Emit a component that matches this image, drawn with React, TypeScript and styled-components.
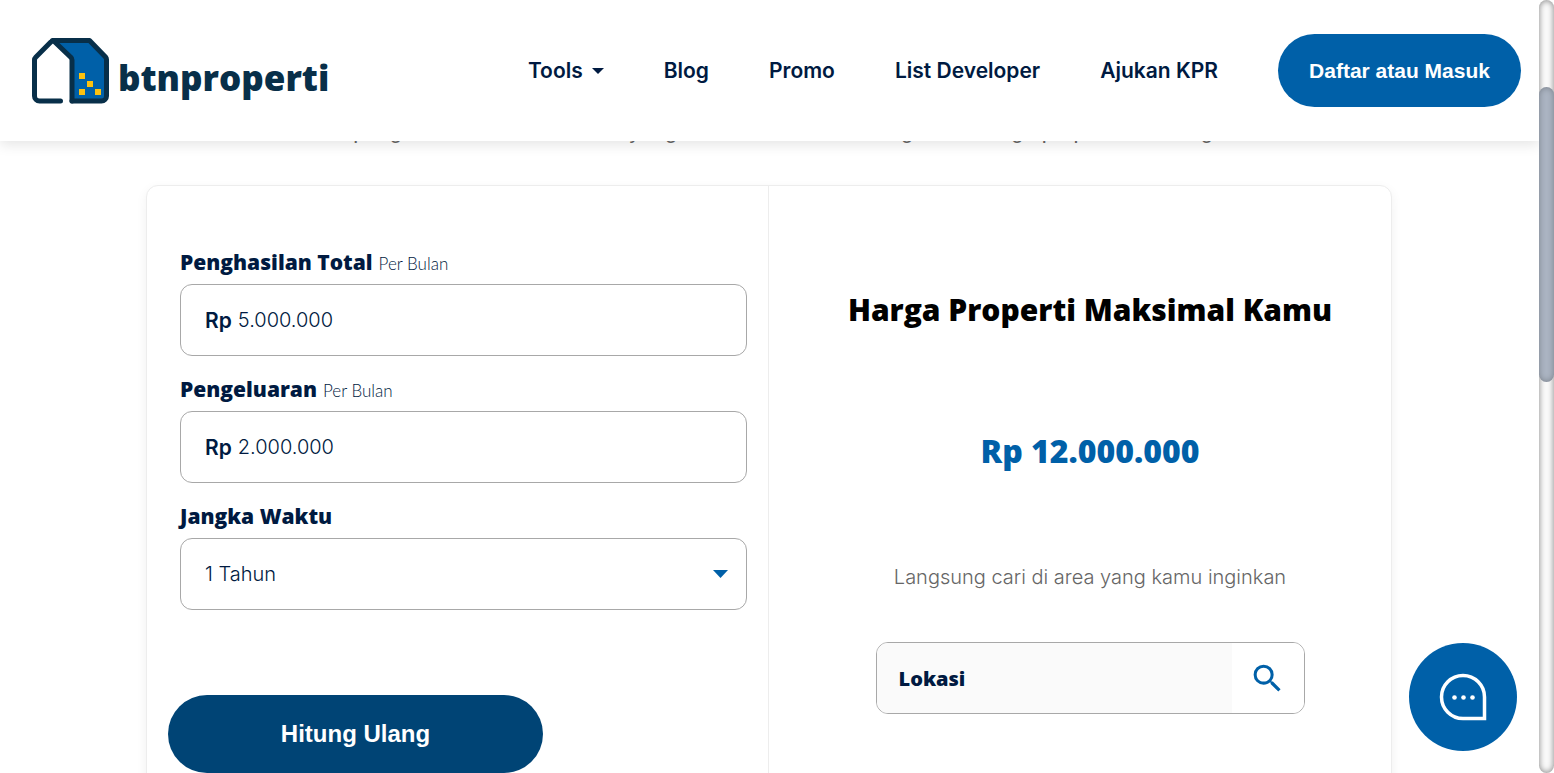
import React, { useState } from "react";
import styled, { createGlobalStyle } from "styled-components";
import { MdSearch } from "react-icons/md";

const navy = "#001a41";
const blue = "#0060a8";
const display = `"Open Sans", Lato, sans-serif`;
const text = `Inter, "Liberation Sans", sans-serif`;

const GlobalStyle = createGlobalStyle`
  *, *::before, *::after { box-sizing: border-box; }
  body { margin: 0; background: #fff; color: ${navy}; font-family: ${text}; }
  button, input, select { font: inherit; color: inherit; }
`;

const Window = styled.div`
  display: grid;
  grid-template-columns: minmax(0, 1fr) 15px;
  height: 100vh;
`;

const Page = styled.div`
  position: relative;
  overflow: hidden;
`;

const ScrollTrack = styled.div`
  display: flex;
  flex-direction: column;
  padding-top: 87px;
  border-radius: 8px;
  background: #fafafa;
  box-shadow: inset 0 0 6px rgba(0, 0, 0, 0.5);
`;

const ScrollThumb = styled.div`
  flex: 0 0 43%;
  border-radius: 8px;
  background: #abb4c2;
  box-shadow: inset 0 0 6px rgba(0, 0, 0, 0.3);
`;

const Header = styled.header`
  position: relative;
  z-index: 2;
  display: flex;
  align-items: center;
  justify-content: space-between;
  height: 141px;
  padding: 0 18px 0 31px;
  background: #fff;
  box-shadow: 0 4px 12px rgba(0, 0, 0, 0.1);
`;

const Brand = styled.a`
  display: flex;
  align-items: center;
  gap: 8px;
  color: #082f49;
  text-decoration: none;
`;

const BrandName = styled.span`
  padding-top: 14px;
  font: 800 35px/48px ${display};
`;

const Nav = styled.nav`
  display: flex;
  align-items: center;
  gap: 60px;
`;

const NavLink = styled.a`
  display: flex;
  align-items: center;
  gap: 9px;
  color: ${navy};
  font-size: 21px;
  font-weight: 600;
  line-height: 24px;
  text-decoration: none;
  white-space: nowrap;
`;

const LoginButton = styled.button`
  width: 243px;
  height: 73px;
  border: 0;
  border-radius: 37px;
  background: ${blue};
  color: #fff;
  font: 700 21px/24px "Liberation Sans", Arial, sans-serif;
  white-space: nowrap;
`;

const Intro = styled.p`
  margin: -22px 0 42px;
  color: #666;
  font: 400 22px/24px "Liberation Sans", Arial, sans-serif;
  text-align: center;
`;

const Main = styled.main`
  padding: 0 147px 0 146px;
`;

const Card = styled.section`
  display: grid;
  grid-template-columns: 1fr 1fr;
  min-height: 680px;
  border: 1px solid #ededed;
  border-radius: 12px;
  background: #fff;
  box-shadow: 0 4px 12px rgba(0, 0, 0, 0.06);
`;

const Form = styled.form`
  padding: 60px 21px 0;
  border-right: 1px solid #ededed;
`;

const Fields = styled.div`
  display: flex;
  flex-direction: column;
  gap: 17px;
  padding-left: 12px;
`;

const Label = styled.label`
  display: flex;
  align-items: baseline;
  gap: 6px;
  height: 38px;
  font: 800 21px/32px ${display};
`;

const Period = styled.span`
  font: 300 17px/32px Lato, sans-serif;
`;

const Field = styled.div`
  display: flex;
  flex-direction: column;
`;

const Box = styled.div`
  position: relative;
  display: flex;
  align-items: center;
  height: 72px;
  overflow: hidden;
  border: 1px solid #a8a8a8;
  border-radius: 12px;
  background: #fff;
`;

const Prefix = styled.span`
  padding: 0 6px 0 24px;
  font-size: 21px;
  font-weight: 600;
`;

const AmountInput = styled.input`
  flex: 1;
  min-width: 0;
  height: 100%;
  padding: 0;
  border: 0;
  outline: 0;
  background: transparent;
  font-size: 20px;
  font-weight: 300;
`;

const TermSelect = styled.select`
  width: 100%;
  height: 100%;
  padding: 0 48px 0 24px;
  border: 0;
  outline: 0;
  appearance: none;
  background: transparent;
  font-size: 20px;
  font-weight: 300;
`;

const SelectCaret = styled.svg`
  position: absolute;
  right: 18px;
  fill: ${blue};
  pointer-events: none;
`;

const SubmitButton = styled.button`
  width: 375px;
  height: 78px;
  margin-top: 85px;
  border: 0;
  border-radius: 39px;
  background: #004475;
  color: #fff;
  font: 700 24px/32px "Liberation Sans", Arial, sans-serif;
`;

const Result = styled.div`
  display: flex;
  flex-direction: column;
  align-items: center;
  padding: 104px 0 0 20px;
  text-align: center;
`;

const ResultTitle = styled.h2`
  margin: 0;
  color: #000;
  font: 800 30px/40px ${display};
  white-space: nowrap;
`;

const Price = styled.output`
  margin-top: 101px;
  color: ${blue};
  font: 800 32px/40px ${display};
`;

const Hint = styled.p`
  margin: 94px 0 53px;
  color: #666;
  font-size: 20px;
  font-weight: 300;
  line-height: 24px;
`;

const SearchBox = styled(Box)`
  width: 429px;
`;

const LocationInput = styled.input`
  flex: 1;
  min-width: 0;
  height: 100%;
  padding: 0 22px;
  border: 0;
  outline: 0;
  background: #fafafa;
  font: 800 20px/32px ${display};
  &::placeholder { color: ${navy}; opacity: 1; }
`;

const SearchButton = styled.button`
  display: grid;
  place-items: center;
  width: 72px;
  height: 100%;
  padding: 0;
  border: 0;
  background: #fff;
  color: ${blue};
`;

const ChatButton = styled.button`
  position: absolute;
  right: 22px;
  bottom: 22px;
  z-index: 3;
  display: grid;
  place-items: center;
  width: 108px;
  height: 108px;
  padding: 0;
  border: 0;
  border-radius: 50%;
  background: ${blue};
`;

function Logo() {
  return (
    <svg width="79" height="68" viewBox="0 0 79 68" fill="none" aria-hidden="true">
      <path d="M22 3.5H58L75.500 22V60a4 4 0 0 1-4 4H41V22Z" fill={blue} />
      <g stroke="#082f49" strokeWidth="5" strokeLinejoin="round" strokeLinecap="round">
        <path d="M29.500 64H8.500a5 5 0 0 1-5-5V23a4 4 0 0 1 1.200-2.800L19.800 5a2.800 2.800 0 0 1 4 0L39.500 20a4 4 0 0 1 1.500 3V64" />
        <path d="M21.500 3.500H58.500L74.500 20a4 4 0 0 1 1 2.600V59a5 5 0 0 1-5 5H41" />
      </g>
      <path d="M48 36h6v6h-6zM56 44h6v6h-6zM48 52h6v6h-6zM64 52h6v6h-6z" fill="#fcc10f" />
    </svg>
  );
}

function AmountField(props: { id: string; label: string; initial: string }) {
  const [value, setValue] = useState(props.initial);
  return (
    <Field>
      <Label htmlFor={props.id}>
        {props.label} <Period>Per Bulan</Period>
      </Label>
      <Box>
        <Prefix>Rp</Prefix>
        <AmountInput id={props.id} value={value} onChange={(e) => setValue(e.target.value)} />
      </Box>
    </Field>
  );
}

export default function App() {
  return (
    <Window>
      <GlobalStyle />
      <Page>
        <Header>
          <Brand href="#">
            <Logo />
            <BrandName>btnproperti</BrandName>
          </Brand>
          <Nav>
            <NavLink href="#tools">
              Tools
              <svg width="12" height="6" viewBox="0 0 12 6" fill={navy} aria-hidden="true">
                <path d="M0 0h12L6 6z" />
              </svg>
            </NavLink>
            <NavLink href="#blog">Blog</NavLink>
            <NavLink href="#promo">Promo</NavLink>
            <NavLink href="#developer">List Developer</NavLink>
            <NavLink href="#kpr">Ajukan KPR</NavLink>
            <LoginButton type="button">Daftar atau Masuk</LoginButton>
          </Nav>
        </Header>
        <Main>
          <Intro>
            Isi penghasilan dan kebutuhan yang kamu miliki untuk mengetahui harga properti sekarang
          </Intro>
          <Card>
            <Form onSubmit={(e) => e.preventDefault()}>
              <Fields>
                <AmountField id="income" label="Penghasilan Total" initial="5.000.000" />
                <AmountField id="expense" label="Pengeluaran" initial="2.000.000" />
                <Field>
                  <Label htmlFor="term">Jangka Waktu</Label>
                  <Box>
                    <TermSelect id="term" defaultValue="1">
                      <option value="1">1 Tahun</option>
                      <option value="2">2 Tahun</option>
                      <option value="3">3 Tahun</option>
                    </TermSelect>
                    <SelectCaret width="15" height="8" viewBox="0 0 15 8" aria-hidden="true">
                      <path d="M0 0h15L7.500 8z" />
                    </SelectCaret>
                  </Box>
                </Field>
              </Fields>
              <SubmitButton type="submit">Hitung Ulang</SubmitButton>
            </Form>
            <Result>
              <ResultTitle>Harga Properti Maksimal Kamu</ResultTitle>
              <Price>Rp 12.000.000</Price>
              <Hint>Langsung cari di area yang kamu inginkan</Hint>
              <SearchBox>
                <LocationInput aria-label="Lokasi" placeholder="Lokasi" />
                <SearchButton type="button" aria-label="Cari">
                  <MdSearch size={37} />
                </SearchButton>
              </SearchBox>
            </Result>
          </Card>
        </Main>
        <ChatButton type="button" aria-label="Chat">
          <svg width="48" height="48" viewBox="0 0 48 48" fill="none" aria-hidden="true">
            <path d="M45.500 45.500H24A21.500 21.500 0 1 1 45.500 24Z" stroke="#fff" strokeWidth="3.500" />
            <g fill="#fff">
              <circle cx="15.500" cy="24.500" r="2.300" />
              <circle cx="24.500" cy="24.500" r="2.300" />
              <circle cx="33.500" cy="24.500" r="2.300" />
            </g>
          </svg>
        </ChatButton>
      </Page>
      <ScrollTrack aria-hidden="true">
        <ScrollThumb />
      </ScrollTrack>
    </Window>
  );
}
